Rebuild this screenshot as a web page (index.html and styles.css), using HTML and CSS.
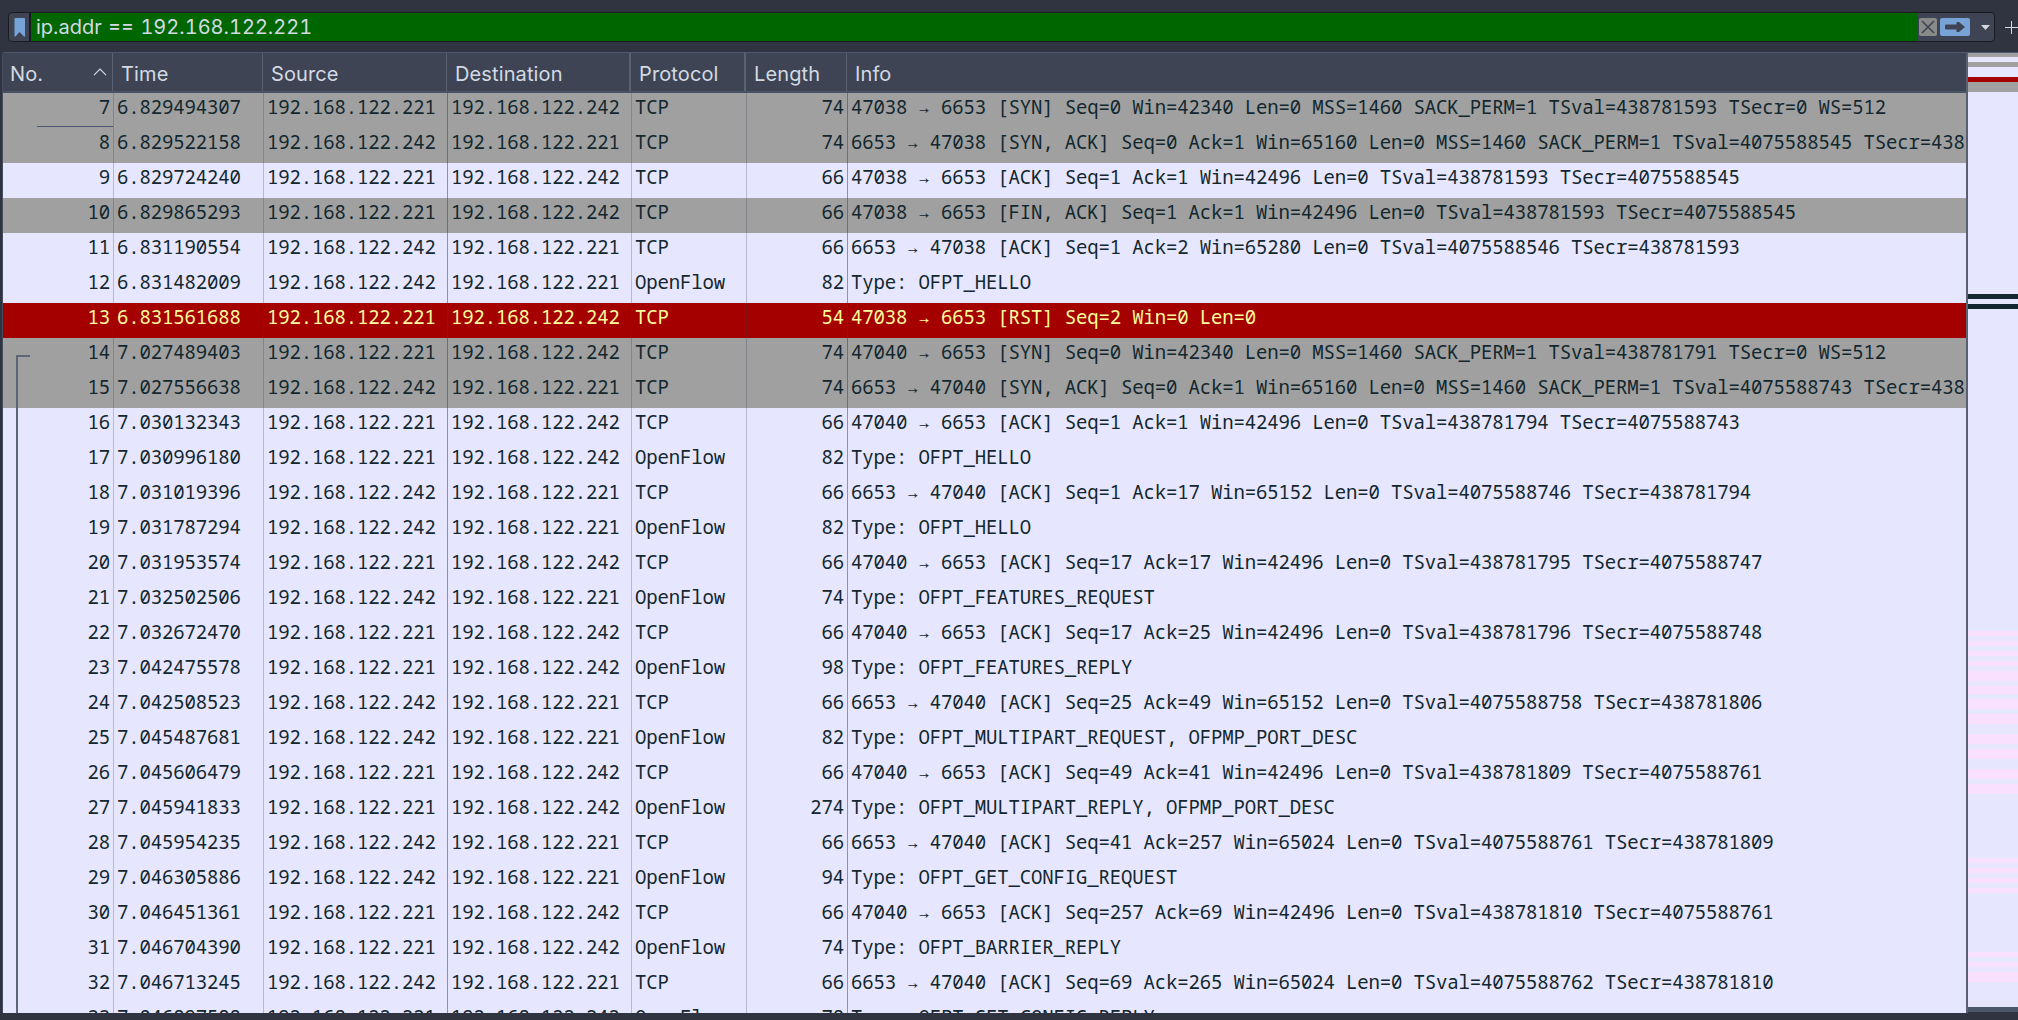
FILE: index.html
```html
<!DOCTYPE html>
<html lang="en">
<head>
<meta charset="utf-8">
<title>Packet list</title>
<link rel="stylesheet" href="styles.css">
</head>
<body>
<div class="toolbar">
  <div class="filter">
    <div class="bookmark"><svg width="12" height="19" viewBox="0 0 12 19"><path d="M1.500 0h8.500a1 1 0 0 1 1 1v17.500h-1L5.500 14 1.500 18.500h-1V1a1 1 0 0 1 1-1z" fill="#78a3d6"/></svg></div>
    <div class="query">ip.addr == 192.168.122.221</div>
    <div class="actions">
      <svg class="clear" width="18" height="18" viewBox="0 0 18 18"><rect width="18" height="18" rx="2" fill="#888b87"/><path d="M3 3l12 12M15 3L3 15" stroke="#3e4453" stroke-width="1.600"/></svg>
      <svg class="apply" width="30" height="18" viewBox="0 0 30 18"><rect width="30" height="18" rx="2" fill="#78a3d6"/><path d="M6 6.500h10.500V4H19l6 5-6 5h-2.500v-2.500H6a1 1 0 0 1-1-1v-3a1 1 0 0 1 1-1z" fill="#3e4453"/></svg>
      <svg class="drop" width="9" height="5" viewBox="0 0 9 5"><path d="M0 0h9L4.500 5z" fill="#d3d7dd"/></svg>
    </div>
  </div>
  <svg class="plus" width="13" height="13" viewBox="0 0 13 13"><path d="M6.500 0v13M0 6.500h13" stroke="#d3dae3"/></svg>
</div>
<div class="main">
  <div class="packets">
    <div class="head">
      <span>No.<svg width="14" height="8" viewBox="0 0 14 8"><path d="M1 7.200l6-6 6 6" fill="none" stroke="#d3dae3" stroke-width="1.200"/></svg></span><span>Time</span><span>Source</span><span>Destination</span><span class="thick">Protocol</span><span class="thick">Length</span><span>Info</span>
    </div>
    <div class="rows" id="rows"></div>
    <div class="stray"></div>
    <div class="stream"></div>
  </div>
  <div class="minimap" id="minimap"></div>
</div>
<script src="packets.js"></script>
</body>
</html>
```
FILE: packets.js
```js
// no | time | last octet of the source | protocol | length | info | row style
const packets = `7|6.829494307|221|TCP|74|47038 → 6653 [SYN] Seq=0 Win=42340 Len=0 MSS=1460 SACK_PERM=1 TSval=438781593 TSecr=0 WS=512|syn
8|6.829522158|242|TCP|74|6653 → 47038 [SYN, ACK] Seq=0 Ack=1 Win=65160 Len=0 MSS=1460 SACK_PERM=1 TSval=4075588545 TSecr=438|syn
9|6.829724240|221|TCP|66|47038 → 6653 [ACK] Seq=1 Ack=1 Win=42496 Len=0 TSval=438781593 TSecr=4075588545|tcp
10|6.829865293|221|TCP|66|47038 → 6653 [FIN, ACK] Seq=1 Ack=1 Win=42496 Len=0 TSval=438781593 TSecr=4075588545|syn
11|6.831190554|242|TCP|66|6653 → 47038 [ACK] Seq=1 Ack=2 Win=65280 Len=0 TSval=4075588546 TSecr=438781593|tcp
12|6.831482009|242|OpenFlow|82|Type: OFPT_HELLO|tcp
13|6.831561688|221|TCP|54|47038 → 6653 [RST] Seq=2 Win=0 Len=0|rst
14|7.027489403|221|TCP|74|47040 → 6653 [SYN] Seq=0 Win=42340 Len=0 MSS=1460 SACK_PERM=1 TSval=438781791 TSecr=0 WS=512|syn
15|7.027556638|242|TCP|74|6653 → 47040 [SYN, ACK] Seq=0 Ack=1 Win=65160 Len=0 MSS=1460 SACK_PERM=1 TSval=4075588743 TSecr=438|syn
16|7.030132343|221|TCP|66|47040 → 6653 [ACK] Seq=1 Ack=1 Win=42496 Len=0 TSval=438781794 TSecr=4075588743|tcp
17|7.030996180|221|OpenFlow|82|Type: OFPT_HELLO|tcp
18|7.031019396|242|TCP|66|6653 → 47040 [ACK] Seq=1 Ack=17 Win=65152 Len=0 TSval=4075588746 TSecr=438781794|tcp
19|7.031787294|242|OpenFlow|82|Type: OFPT_HELLO|tcp
20|7.031953574|221|TCP|66|47040 → 6653 [ACK] Seq=17 Ack=17 Win=42496 Len=0 TSval=438781795 TSecr=4075588747|tcp
21|7.032502506|242|OpenFlow|74|Type: OFPT_FEATURES_REQUEST|tcp
22|7.032672470|221|TCP|66|47040 → 6653 [ACK] Seq=17 Ack=25 Win=42496 Len=0 TSval=438781796 TSecr=4075588748|tcp
23|7.042475578|221|OpenFlow|98|Type: OFPT_FEATURES_REPLY|tcp
24|7.042508523|242|TCP|66|6653 → 47040 [ACK] Seq=25 Ack=49 Win=65152 Len=0 TSval=4075588758 TSecr=438781806|tcp
25|7.045487681|242|OpenFlow|82|Type: OFPT_MULTIPART_REQUEST, OFPMP_PORT_DESC|tcp
26|7.045606479|221|TCP|66|47040 → 6653 [ACK] Seq=49 Ack=41 Win=42496 Len=0 TSval=438781809 TSecr=4075588761|tcp
27|7.045941833|221|OpenFlow|274|Type: OFPT_MULTIPART_REPLY, OFPMP_PORT_DESC|tcp
28|7.045954235|242|TCP|66|6653 → 47040 [ACK] Seq=41 Ack=257 Win=65024 Len=0 TSval=4075588761 TSecr=438781809|tcp
29|7.046305886|242|OpenFlow|94|Type: OFPT_GET_CONFIG_REQUEST|tcp
30|7.046451361|221|TCP|66|47040 → 6653 [ACK] Seq=257 Ack=69 Win=42496 Len=0 TSval=438781810 TSecr=4075588761|tcp
31|7.046704390|221|OpenFlow|74|Type: OFPT_BARRIER_REPLY|tcp
32|7.046713245|242|TCP|66|6653 → 47040 [ACK] Seq=69 Ack=265 Win=65024 Len=0 TSval=4075588762 TSecr=438781810|tcp
33|7.046897588|221|OpenFlow|78|Type: OFPT_GET_CONFIG_REPLY|tcp`;

document.getElementById('rows').innerHTML = packets.split('\n').map(line => {
  const [no, time, src, proto, len, info, kind] = line.split('|');
  const dst = src === '221' ? '242' : '221';
  const cells = [no, time, '192.168.122.' + src, '192.168.122.' + dst, proto, len, info];
  return `<div class="row ${kind}">${cells.map(c => `<span>${c}</span>`).join('')}</div>`;
}).join('');

// minimap bands: height and colour class
const bands = [[4,'syn'],[5,''],[5,'syn'],[10,''],[5,'rst'],[10,'syn'],[202,''],[5,'ink'],[5,''],[5,'ink'],[322,''],
  [5,'arp'],[5,''],[5,'arp'],[5,''],[5,'arp'],[5,''],[5,'arp'],[5,''],[10,'arp'],[5,''],[8,'arp'],[5,''],[10,'arp'],[5,''],
  [10,'arp'],[10,''],[10,'arp'],[5,''],[10,'arp'],[10,''],[10,'arp'],[5,''],[10,'arp'],[64,''],
  [5,'arp'],[5,''],[5,'arp'],[5,''],[5,'arp'],[5,''],[5,'arp'],[59,''],[5,'arp'],[5,''],[5,'arp'],[5,''],[10,'arp'],[25,'']];
document.getElementById('minimap').innerHTML =
  bands.map(([h, c]) => `<div class="band ${c}" style="height:${h}px"></div>`).join('');
```
FILE: styles.css
```css
* { box-sizing: border-box; }
html, body { margin: 0; height: 100%; overflow: hidden; }
body {
  display: flex;
  flex-direction: column;
  background: #2f3440;
  color: #d3dae3;
  font-family: Inter, sans-serif;
}
svg { display: block; flex: none; }

.toolbar { display: flex; height: 52px; padding: 12px 0 0 8px; flex: none; }
.filter {
  display: flex;
  width: 1987px;
  height: 30px;
  border: 1px solid #191b21;
  border-radius: 4px;
  background: #3e4453;
  overflow: hidden;
  flex: none;
}
.bookmark { width: 22px; padding: 5px 0 0 5px; border-right: 2px solid #191b21; flex: none; }
.query {
  flex: 1;
  background: #006600;
  color: #d3dae3;
  font-size: 20px;
  line-height: 29px;
  padding-left: 5px;
  word-spacing: 1px;
  font-variant-numeric: tabular-nums;
  white-space: pre;
}
.actions { display: flex; width: 76px; padding: 5px 0 0 1px; }
.apply { margin-left: 3px; }
.drop { margin: 7px 0 0 11px; }
.plus { margin: 9px 0 0 10px; }

.main { display: flex; height: 961px; padding-left: 2px; flex: none; }
.packets {
  position: relative;
  width: 1966px;
  height: 961px;
  border-top: 1px solid #4f5a70;
  border-left: 1px solid #454d5e;
  border-right: 2px solid #5b6070;
  border-top-left-radius: 3px;
  overflow: hidden;
  flex: none;
}
.head, .row { display: grid; grid-template-columns: 110px 150px 184px 184px 115px 101px 1fr; }
.head {
  height: 40px;
  background: #3e4453;
  border-bottom: 2px solid #4a5366;
  font-size: 20px;
  line-height: 42px;
  letter-spacing: 0.12px;
}
.head span { display: flex; height: 38px; padding-left: 8px; border-left: 1px solid #5a6172; margin-left: -1px; }
.head span:first-child { padding-left: 7px; border-left: 0; margin-left: 0; }
.head .thick { border-left: 2px solid #5a6172; margin-left: -2px; }
.head svg { margin: 15px 6px 0 auto; }

.rows {
  font-family: "Noto Sans Mono", "DejaVu Sans Mono", monospace;
  font-size: 19px;
  letter-spacing: -0.15px;
}
.row { height: 35px; line-height: 29px; color: #12272e; }
.row span {
  height: 35px;
  padding-left: 3px;
  border-left: 1px solid rgba(60, 60, 90, 0.28);
  white-space: pre;
  overflow: hidden;
}
.row span:first-child { border-left: 0; text-align: right; padding-right: 3px; }
.row span:nth-child(6) { text-align: right; padding-right: 3px; }
.row span:nth-child(4), .row span:nth-child(7) { border-left-color: rgba(60, 60, 90, 0.5); }
.tcp { background: #e6e6ff; }
.syn { background: #a0a0a0; }
.rst { background: #a40000; }
.row.rst { color: #fffc9c; }

/* overlays on the number column */
.stray { position: absolute; left: 34px; top: 73px; width: 76px; height: 1px; background: #4a5571; }
.stream {
  position: absolute;
  left: 13px;
  top: 302px;
  width: 14px;
  height: 660px;
  border: solid #5c6675;
  border-width: 2px 0 0 2px;
}

.minimap {
  flex: 1;
  height: 960px;
  background: #e6e6ff;
  border-top: 1px solid #4f5a70;
  border-bottom: 5px solid #4b5666;
  overflow: hidden;
}
.arp { background: #fae0ff; }
.ink { background: #12272e; }
```
